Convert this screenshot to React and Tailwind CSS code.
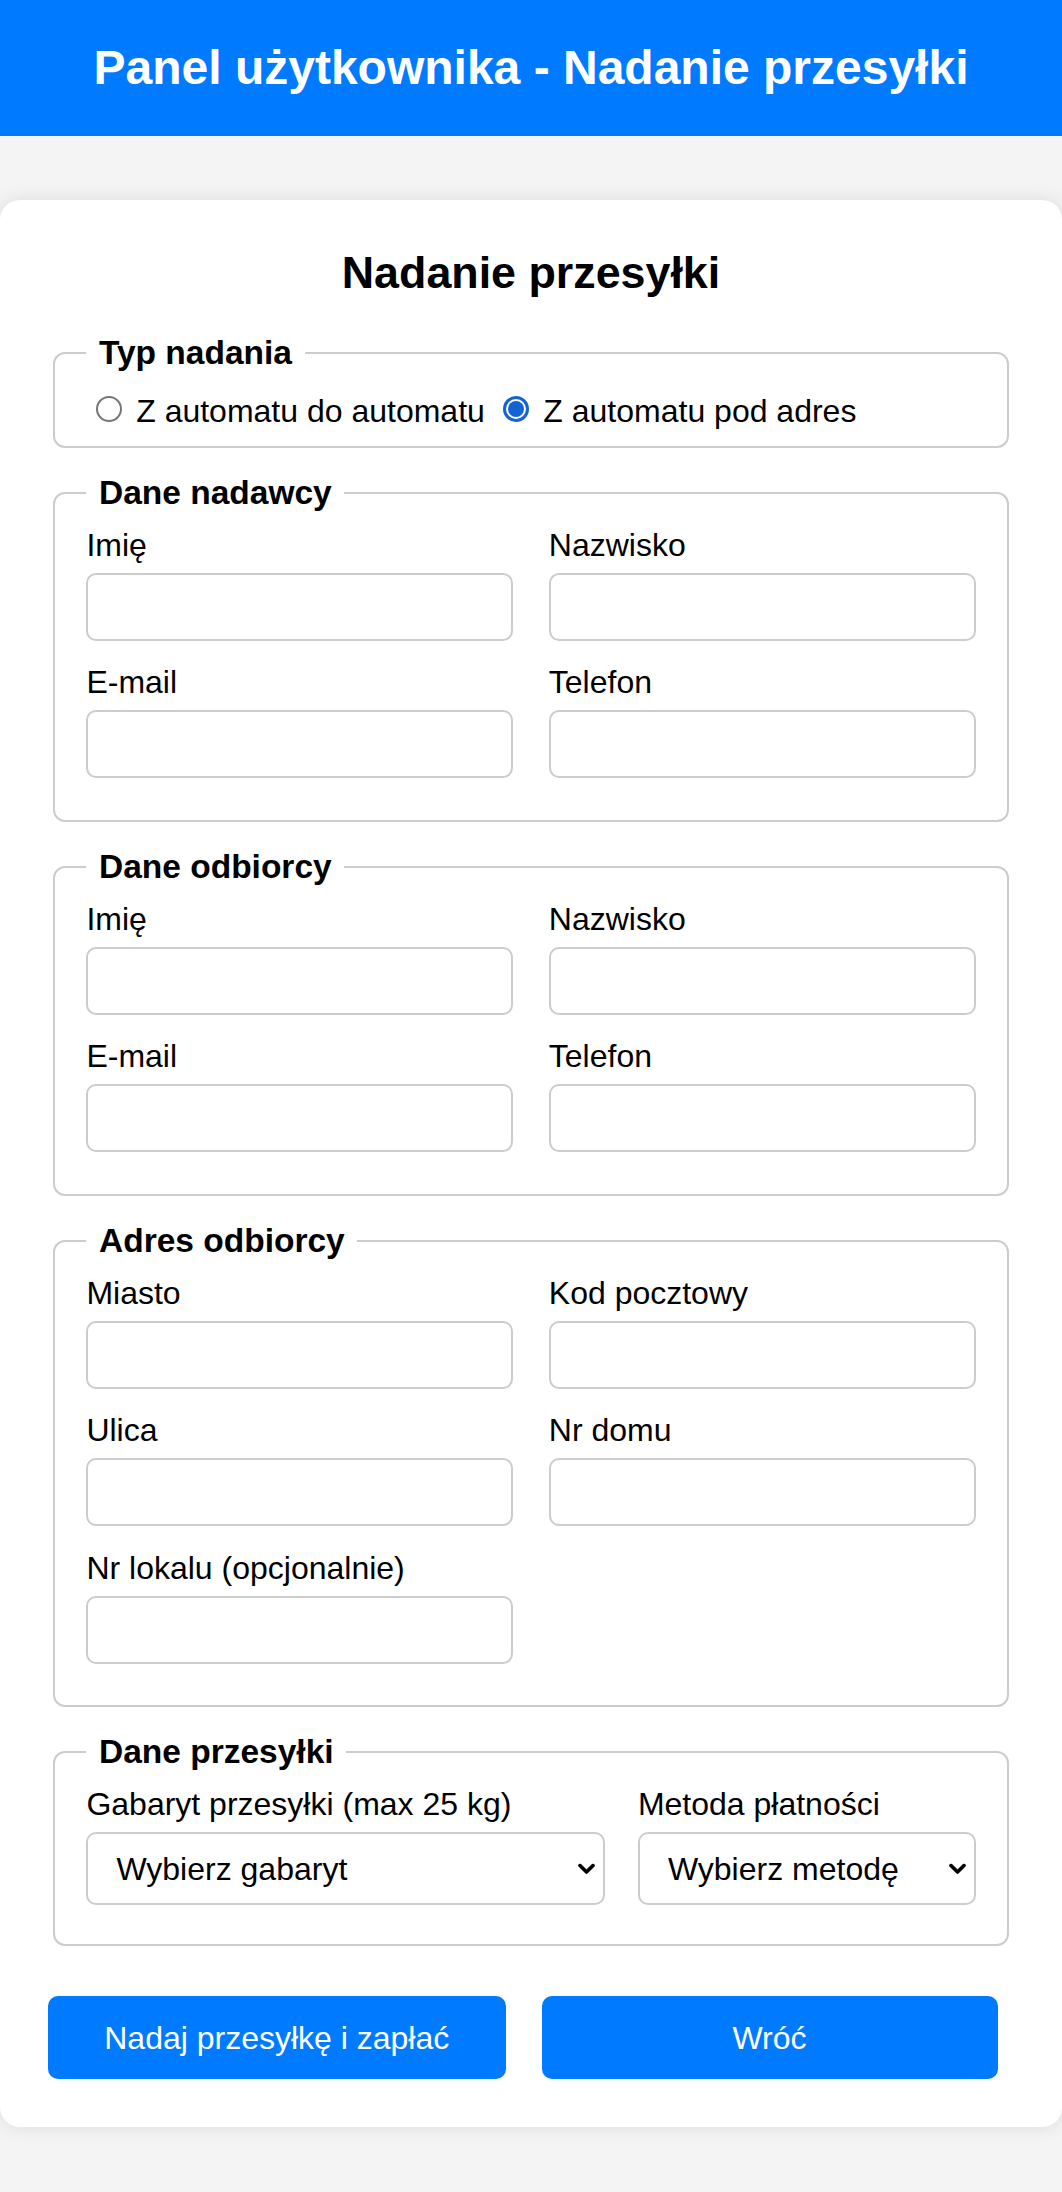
import React from "react";

function Chevron() {
  return (
    <svg
      className="pointer-events-none absolute right-[10px] top-1/2 -translate-y-1/2"
      width="17"
      height="11"
      viewBox="0 0 17 11"
      fill="none"
    >
      <path d="M2 2 L8.5 8.5 L15 2" stroke="#000" strokeWidth="3.6" strokeLinecap="round" strokeLinejoin="round" />
    </svg>
  );
}

function Field({ label }) {
  return (
    <div className="mb-[23.5px]">
      <label className="block h-[36px] leading-[36px] mb-[10px] text-[32px] whitespace-nowrap">{label}</label>
      <input
        type="text"
        className="block w-full h-[68px] border-2 border-[#ccc] rounded-[10px] bg-white px-[16px] text-[32px] outline-none"
      />
    </div>
  );
}

function Section({ title, children, pt = "pt-[15px]" }) {
  return (
    <fieldset className={`mx-[5px] mb-[26px] border-2 border-[#ccc] rounded-[12px] px-[31.4px] pb-[18px] ${pt}`}>
      <legend className="px-[12.6px] text-[33.5px] leading-[38px] font-bold">{title}</legend>
      {children}
    </fieldset>
  );
}

function Radio({ checked, label }) {
  return (
    <label className="inline-flex items-center">
      {checked ? (
        <span className="ml-[9.8px] mr-[14.5px] mb-[4px] flex h-[25.5px] w-[25.5px] shrink-0 items-center justify-center rounded-full border-[3px] border-[#1363d1] bg-white">
          <span className="h-[15.5px] w-[15.5px] rounded-full bg-[#1363d1]" />
        </span>
      ) : (
        <span className="ml-[9.8px] mr-[14.5px] mb-[4px] block h-[25.5px] w-[25.5px] shrink-0 rounded-full border-2 border-[#767676] bg-white" />
      )}
      <span className="text-[32px] leading-[36px] whitespace-nowrap">{label}</span>
    </label>
  );
}

function PersonFields() {
  return (
    <div className="grid grid-cols-2 gap-x-[35.6px]">
      <Field label="Imię" />
      <Field label="Nazwisko" />
      <Field label="E-mail" />
      <Field label="Telefon" />
    </div>
  );
}

export default function App() {
  return (
    <div className="min-h-screen bg-[#f4f4f4] font-['Liberation_Sans',Arial,sans-serif] text-black flow-root">
      <header className="bg-[#007bff] py-[41px] text-center">
        <h1 className="text-[48px] leading-[54px] font-bold text-white">Panel użytkownika - Nadanie przesyłki</h1>
      </header>

      <main className="mt-[64px] mb-[65px] bg-white rounded-[20px] shadow-[0_0_20px_rgba(0,0,0,0.1)] pt-[47px] px-[48px] pb-[48px]">
        <h2 className="text-center text-[44.8px] leading-[51px] font-bold mb-[36px]">Nadanie przesyłki</h2>

        <form onSubmit={(e) => e.preventDefault()}>
          <Section title="Typ nadania" pt="pt-[20.8px]">
            <div className="flex h-[36px] items-center gap-x-[8.7px] mb-[-1px]">
              <Radio label="Z automatu do automatu" />
              <Radio checked label="Z automatu pod adres" />
            </div>
          </Section>

          <Section title="Dane nadawcy">
            <PersonFields />
          </Section>

          <Section title="Dane odbiorcy">
            <PersonFields />
          </Section>

          <Section title="Adres odbiorcy">
            <div className="grid grid-cols-2 gap-x-[35.6px]">
              <Field label="Miasto" />
              <Field label="Kod pocztowy" />
              <Field label="Ulica" />
              <Field label="Nr domu" />
              <Field label="Nr lokalu (opcjonalnie)" />
            </div>
          </Section>

          <Section title="Dane przesyłki">
            <div className="grid grid-cols-[518.5px_1fr] gap-x-[33px] mb-[21px]">
              <div>
                <label className="block h-[36px] leading-[36px] mb-[10px] text-[32px] whitespace-nowrap">Gabaryt przesyłki (max 25 kg)</label>
                <div className="relative">
                  <select className="block w-full h-[73px] appearance-none border-2 border-[#ccc] rounded-[10px] bg-white pl-[28px] pr-[40px] text-[32px] text-black outline-none">
                    <option>Wybierz gabaryt</option>
                    <option>Mały</option>
                    <option>Średni</option>
                    <option>Duży</option>
                  </select>
                  <Chevron />
                </div>
              </div>
              <div>
                <label className="block h-[36px] leading-[36px] mb-[10px] text-[32px] whitespace-nowrap">Metoda płatności</label>
                <div className="relative">
                  <select className="block w-full h-[73px] appearance-none border-2 border-[#ccc] rounded-[10px] bg-white pl-[28px] pr-[40px] text-[32px] text-black outline-none">
                    <option>Wybierz metodę</option>
                    <option>BLIK</option>
                    <option>Karta</option>
                    <option>Przelew</option>
                  </select>
                  <Chevron />
                </div>
              </div>
            </div>
          </Section>

          <div className="flex gap-x-[36px] mt-[50px]">
            <button type="submit" className="w-[457.5px] h-[83px] rounded-[10px] bg-[#007bff] text-white text-[32px] leading-[36px]">
              Nadaj przesyłkę i zapłać
            </button>
            <button type="button" className="w-[456px] h-[83px] rounded-[10px] bg-[#007bff] text-white text-[32px] leading-[36px]">
              Wróć
            </button>
          </div>
        </form>
      </main>
    </div>
  );
}
